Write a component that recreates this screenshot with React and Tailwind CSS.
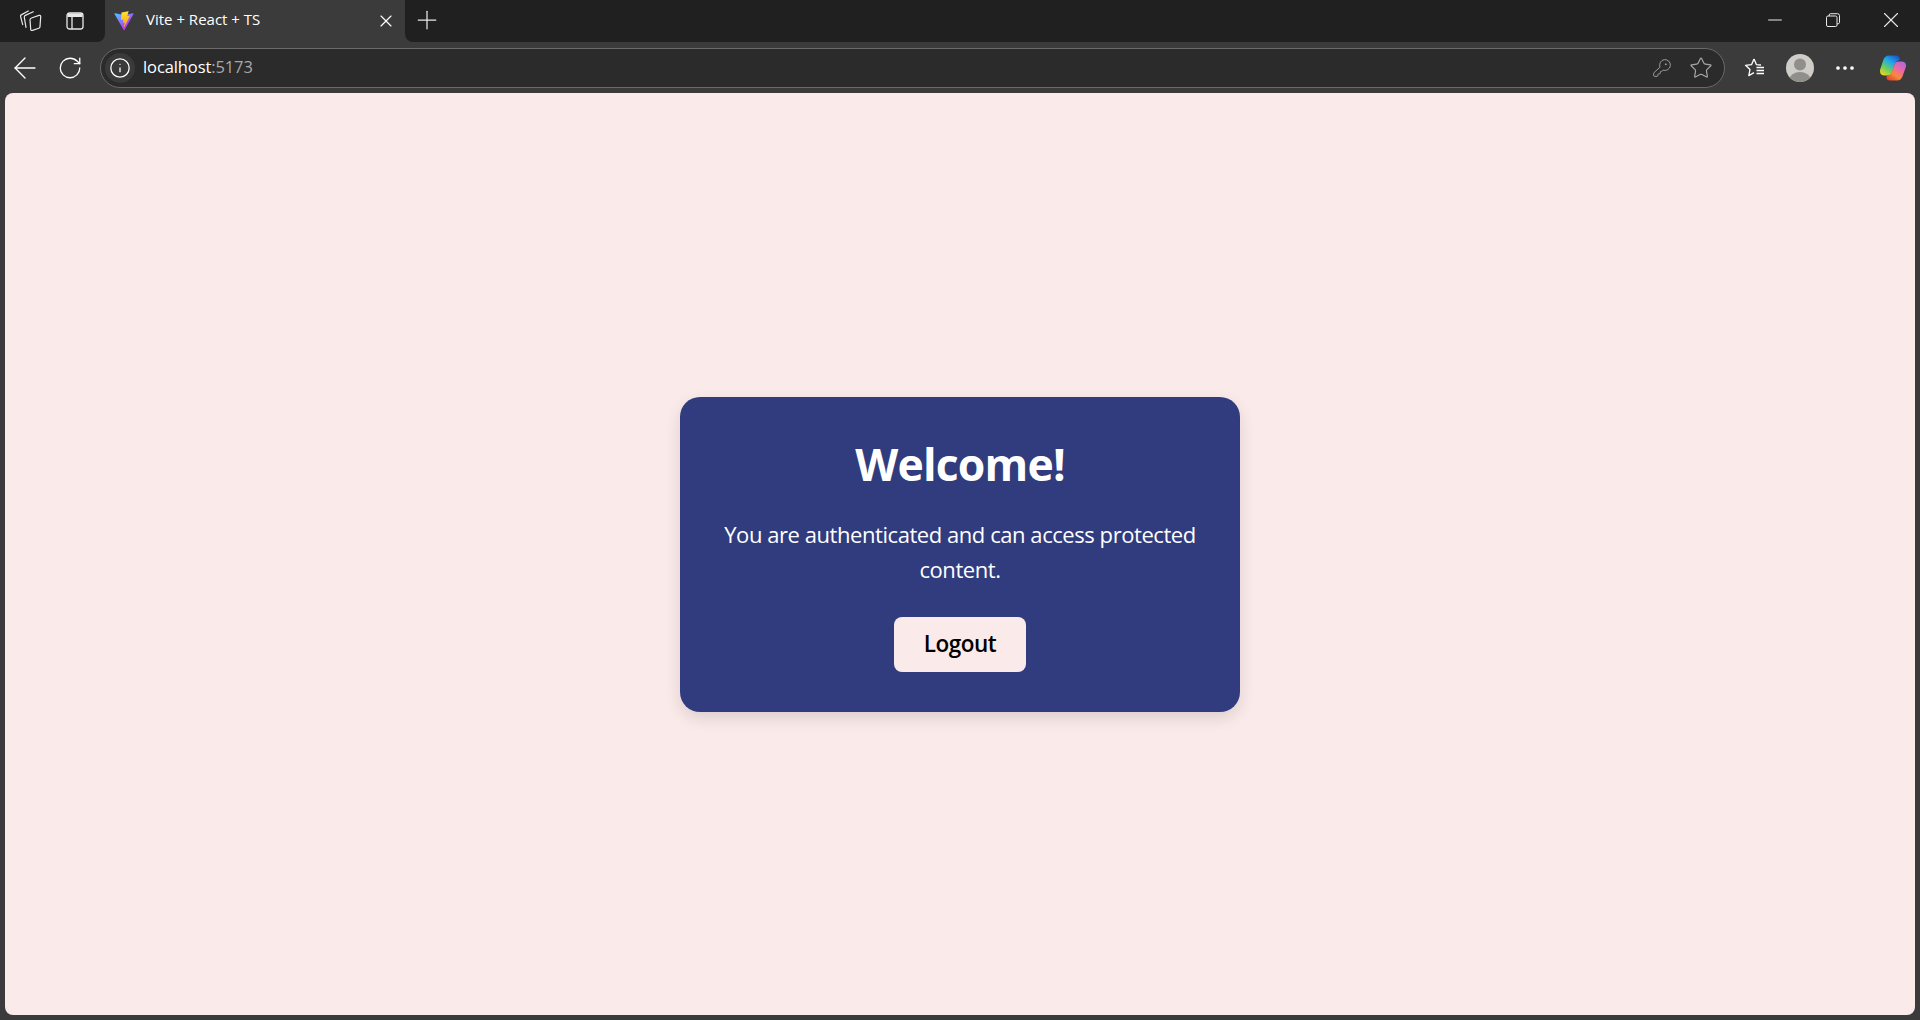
import { ArrowLeft, RotateCw, Info, KeyRound, Star, X, Plus, Minus, MoreHorizontal } from 'lucide-react';

function TabsIcon() {
  return (
    <svg width="22" height="22" viewBox="0 0 22 22" fill="none" stroke="currentColor" strokeWidth="1.2" strokeLinejoin="round" strokeLinecap="round">
      <path d="M2.7 14.7 L0.6 6.6 Q0.3 5.2 1.6 4.6 L8.3 1" />
      <path d="M6 17.3 L4.3 7.4 Q4.1 6 5.4 5.4 L13.3 1.8" />
      <path d="M11.5 8 L19 5.4 Q20.8 4.9 20.7 6.6 L20 16.6 Q19.9 17.8 18.8 18.2 L12.5 20.4 Q10.8 20.9 10.7 19.2 L10 9.8 Q10 8.5 11.5 8Z" />
    </svg>
  );
}

function VerticalTabsIcon() {
  return (
    <svg width="18" height="18" viewBox="0 0 18 18" fill="none" stroke="currentColor" strokeWidth="1.3">
      <rect x="1" y="1" width="16" height="16" rx="2.5" />
      <path d="M1.5 2.5 Q1.5 1.5 3 1.5 H15 Q16.5 1.5 16.5 2.5 V5 H1.5 Z" fill="currentColor" stroke="none" />
      <path d="M6 5 V17" />
    </svg>
  );
}

function ViteLogo() {
  return (
    <svg width="20" height="20" viewBox="0 0 410 404">
      <defs>
        <linearGradient id="viteA" x1="6" y1="33" x2="235" y2="344" gradientUnits="userSpaceOnUse">
          <stop stopColor="#41D1FF" />
          <stop offset="1" stopColor="#BD34FE" />
        </linearGradient>
        <linearGradient id="viteB" x1="194" y1="8" x2="236" y2="292" gradientUnits="userSpaceOnUse">
          <stop stopColor="#FFEA83" />
          <stop offset="0.08" stopColor="#FFDD35" />
          <stop offset="1" stopColor="#FFA800" />
        </linearGradient>
      </defs>
      <path d="M399.6 59.5 215.9 388.2c-3.8 6.8-13.5 6.8-17.4.1L11.2 59.5c-4.2-7.4 2.1-16.3 10.4-14.8l183.9 32.9c1.2.2 2.4.2 3.5 0l180-32.8c8.3-1.5 14.7 7.3 10.6 14.7Z" fill="url(#viteA)" />
      <path d="M292.9 1.6 156.9 28.2c-2.2.4-3.9 2.3-4 4.6l-8.4 141.3c-.2 3.3 2.9 5.9 6.1 5.2l37.9-8.7c3.5-.8 6.7 2.3 6 5.8l-11.3 55.1c-.8 3.7 2.7 6.9 6.3 5.8l23.4-7.1c3.6-1.1 7.1 2.1 6.3 5.8l-17.9 86.6c-1.1 5.4 6.1 8.4 9.1 3.7l2-3.1 110.9-221.3c1.9-3.7-1.3-7.9-5.4-7.1l-39 7.5c-3.7.7-6.8-2.7-5.8-6.3l25.4-88.2c1-3.7-2.1-7.1-5.8-6.4Z" fill="url(#viteB)" />
    </svg>
  );
}

function FavoritesIcon() {
  return (
    <svg width="22" height="22" viewBox="0 0 22 22" fill="none" stroke="white" strokeWidth="1.3" strokeLinejoin="round">
      <path d="M10 2 L12.4 7.6 L17 8" />
      <path d="M10 2 L7.6 7.6 L1.5 8.3 L6 12.4 L4.8 18.6 L10 15.6" />
      <path d="M12.5 10.5 H20 M12.5 13.5 H20 M12.5 16.5 H20" />
    </svg>
  );
}

function Avatar() {
  return (
    <svg width="28" height="28" viewBox="0 0 28 28">
      <defs>
        <clipPath id="avatarClip">
          <circle cx="14" cy="14" r="14" />
        </clipPath>
      </defs>
      <circle cx="14" cy="14" r="14" fill="#cfcdc8" />
      <g clipPath="url(#avatarClip)" fill="#918f8b">
        <circle cx="14" cy="10.5" r="6" />
        <ellipse cx="14" cy="25.5" rx="10.5" ry="7.5" />
      </g>
    </svg>
  );
}

function CopilotLogo() {
  return (
    <svg width="28" height="28" viewBox="0 0 28 28">
      <defs>
        <linearGradient id="copA" x1="5" y1="22" x2="18" y2="2" gradientUnits="userSpaceOnUse">
          <stop stopColor="#f2d21e" />
          <stop offset="0.3" stopColor="#6fd05a" />
          <stop offset="0.65" stopColor="#1fa8e8" />
          <stop offset="1" stopColor="#1d55d0" />
        </linearGradient>
        <linearGradient id="copB" x1="12" y1="27" x2="25" y2="7" gradientUnits="userSpaceOnUse">
          <stop stopColor="#e8452c" />
          <stop offset="0.3" stopColor="#f78a3c" />
          <stop offset="0.6" stopColor="#ee66a8" />
          <stop offset="1" stopColor="#a468e8" />
        </linearGradient>
      </defs>
      <path d="M10 1.5 H17 Q20 1.5 20.5 4 L20.5 6 Q16.5 7 15.5 10.5 L13 18 Q12 21.5 9 21.5 H5 Q0.5 21 1 16 L4 7 Q5.5 1.5 10 1.5Z" fill="url(#copA)" />
      <path d="M19.5 7.5 H23 Q27.5 8 27 12.5 L24 21 Q22.5 26.5 18 26.5 H11 Q8 26.5 7.5 24 L7.5 22.5 Q11.5 21.5 12.8 18 L15.5 10.5 Q16.5 7.5 19.5 7.5Z" fill="url(#copB)" />
    </svg>
  );
}

export default function App() {
  return (
    <div className="h-[1020px] w-[1920px] flex flex-col bg-[#3b3b3b] overflow-hidden font-['Open_Sans','Noto_Sans',sans-serif]">
      {/* Tab strip */}
      <div className="h-[42px] flex shrink-0">
        <div className="w-[105px] bg-[#202020] rounded-br-lg flex items-center text-[#e8e8e8] pl-[20px] gap-[24px]">
          <TabsIcon />
          <VerticalTabsIcon />
        </div>
        <div className="w-[300px] bg-[#3b3b3b] rounded-t-lg flex items-center pl-[9px] pr-[9px] text-white">
          <ViteLogo />
          <span className="ml-[12px] mb-[3px] text-[15px] flex-1 whitespace-nowrap">Vite + React + TS</span>
          <X size={20} strokeWidth={1.4} />
        </div>
        <div className="flex-1 bg-[#202020] rounded-bl-lg flex items-center text-[#e8e8e8]">
          <Plus size={30} strokeWidth={1} className="ml-[7px] mb-[2px]" />
          <div className="ml-auto flex items-center mb-[2px]">
            <div className="w-[58px] flex justify-center"><Minus size={22} strokeWidth={1.1} /></div>
            <div className="w-[58px] flex justify-center">
              <svg width="14" height="14" viewBox="0 0 14 14" fill="none" stroke="currentColor" strokeWidth="1">
                <rect x="0.5" y="3" width="10.5" height="10.5" rx="1.5" />
                <path d="M3.2 3 V2 Q3.2 0.7 4.7 0.7 H11.5 Q13.5 0.7 13.5 2.7 V9.5 Q13.5 11 11 11" />
              </svg>
            </div>
            <div className="w-[58px] flex justify-center"><X size={26} strokeWidth={1} /></div>
          </div>
        </div>
      </div>

      {/* Address bar */}
      <div className="h-[51px] flex items-center shrink-0 text-white">
        <div className="w-[100px] shrink-0 flex items-center pl-[8px] gap-[15px]">
          <ArrowLeft size={34} strokeWidth={0.95} />
          <RotateCw size={26} strokeWidth={1.2} />
        </div>
        <div className="w-[1625px] h-[40px] rounded-full border border-[#6a6a6a] bg-[#2b2b2b] flex items-center pl-[4px] pr-[11px]">
          <div className="w-[30px] h-[30px] rounded-full bg-[#3a3a3a] flex items-center justify-center">
            <Info size={22} strokeWidth={1.4} />
          </div>
          <span className="ml-[8px] text-[16.5px] tracking-[-0.1px]">
            localhost<span className="text-[#a8a8a8]">:5173</span>
          </span>
          <div className="ml-auto flex items-center gap-[17px] text-[#a6a6a6]">
            <KeyRound size={20} strokeWidth={1.1} />
            <Star size={24} strokeWidth={1.2} />
          </div>
        </div>
        <div className="flex-1 flex items-center pl-[19px]">
          <FavoritesIcon />
          <div className="ml-[20px]"><Avatar /></div>
          <MoreHorizontal size={24} strokeWidth={1.7} className="ml-[19px]" />
          <div className="ml-[22px]"><CopilotLogo /></div>
        </div>
      </div>

      {/* Page */}
      <div className="mx-[5px] h-[922px] rounded-lg bg-[#fbeaea] flex items-center justify-center">
        <div className="w-[560px] h-[315px] rounded-[20px] bg-[#303c7e] shadow-[0_6px_16px_rgba(0,0,0,0.12)] px-[40px] pt-[35px] text-center text-white">
          <h1 className="text-[44.5px] leading-[64px] font-bold tracking-[-0.8px]">Welcome!</h1>
          <p className="mt-[21px] text-[22px] leading-[35px] tracking-[-0.44px]">
            You are authenticated and can access protected content.
          </p>
          <button className="mt-[30px] w-[132px] h-[55px] rounded-lg bg-[#fbeaea] text-black text-[22.5px] font-semibold tracking-[-0.5px]">
            Logout
          </button>
        </div>
      </div>
    </div>
  );
}
